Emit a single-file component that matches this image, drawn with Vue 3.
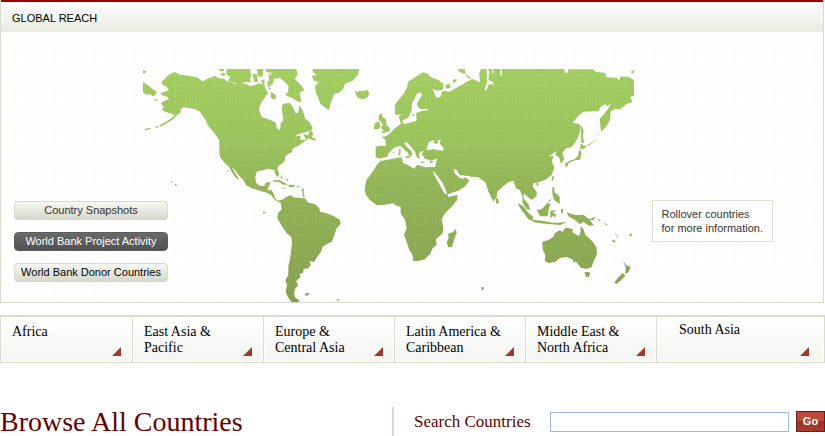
<script setup>
import { ref } from 'vue'

const views = ['Country Snapshots', 'World Bank Project Activity', 'World Bank Donor Countries']
const activeView = ref(1)
const query = ref('')

const regions = [
  ['Africa'],
  ['East Asia &', 'Pacific'],
  ['Europe &', 'Central Asia'],
  ['Latin America &', 'Caribbean'],
  ['Middle East &', 'North Africa'],
  ['South Asia'],
]
</script>

<template>
  <main class="page">
    <section class="reach">
      <h2 class="reach-title">GLOBAL REACH</h2>
      <div class="reach-body">
        <svg class="map" viewBox="429 207 1473 699" role="img" aria-label="World map">
          <defs>
            <linearGradient id="land" x1="0" y1="0" x2="0" y2="1">
              <stop offset="0" stop-color="#a2cd61" />
              <stop offset="0.3" stop-color="#9bc35d" />
              <stop offset="0.5" stop-color="#92b457" />
              <stop offset="1" stop-color="#87a04f" />
            </linearGradient>
            <pattern id="mesh" x="435" y="195" width="30" height="30" patternUnits="userSpaceOnUse">
              <path d="M0 1.5H30M1.5 0V30" stroke="#fff" stroke-opacity=".05" stroke-width="3" fill="none" />
            </pattern>
            <filter id="coast" x="429" y="207" width="1473" height="699" filterUnits="userSpaceOnUse" color-interpolation-filters="sRGB">
              <feTurbulence type="fractalNoise" baseFrequency="0.09" numOctaves="1" seed="4" result="n" />
              <feDisplacementMap in="SourceGraphic" in2="n" scale="4" xChannelSelector="R" yChannelSelector="G" />
            </filter>
            <mask id="continents" maskUnits="userSpaceOnUse" x="429" y="207" width="1473" height="699">
              <g filter="url(#coast)" fill="#fff">
                <!-- North America -->
                <g transform="translate(405 180)">
                  <path d="M80 65L95 50 105 42 120 36 135 44 160 47 185 52 203 64 215 58 240 47 250 55 268 56 275 64 290 66 300 73 315 71 330 70 345 78 360 75 370 70 385 72 395 80 408 84 402 95 395 105 388 115 378 130 372 145 375 160 382 172 400 178 415 184 423 190 425 203 432 210 436 208 437 190 445 180 443 165 440 150 442 135 447 125 460 125 470 135 478 150 485 160 491 150 494 136 505 155 510 175 525 188 533 205 527 212 505 218 490 222 480 230 497 226 496 240 515 240 500 250 490 258 480 262 470 270 472 276 455 285 450 292 450 300 445 308 430 318 427 328 432 340 430 352 422 345 418 330 400 326 385 330 365 335 361 350 363 368 375 378 387 378 392 368 407 366 402 378 397 390 410 391 418 405 420 415 430 422 443 418 446 430 432 427 420 420 408 405 395 398 375 392 350 385 333 375 325 360 310 345 300 330 290 320 298 335 310 355 311 361 300 351 290 335 280 318 268 308 255 290 253 275 253 240 240 222 228 207 218 195 212 180 203 168 195 155 180 148 160 143 145 142 135 150 139 156 125 166 115 178 95 190 75 200 73 196 90 187 110 175 118 165 105 160 90 155 80 148 87 142 78 130 88 122 102 118 98 110 85 108 76 99 95 93 102 90 95 80 80 72Z" />
                  <path d="M20 63L35 73 50 85 66 97 55 110 46 102 35 104 20 95ZM20 30L34 34 30 40 20 39ZM56 117L72 120 60 123ZM28 207L48 203 46 208 30 211ZM58 202L72 197 68 203ZM248 22H269L266 34 255 34ZM260 38L272 40 268 48 258 46ZM275 22H345L347 42 354 57 344 67 326 66 318 75 308 72 290 65 278 62 286 50 274 44ZM352 40L366 44 369 66 357 66ZM365 22H386L384 44 379 51 368 48ZM376 62L391 57 408 68 405 82 390 78ZM391 22H483L488 44 479 57 498 75 508 90 494 98 499 127 486 124 470 113 450 105 459 96 461 79 449 65 434 53 420 57 408 50 409 38 394 36ZM400 38L417 58 411 77 403 66ZM408 95L424 106 420 122 407 116ZM504 222L519 226 526 210 535 221 530 232 544 238 538 242 520 235 514 241Z" />
                  <path d="M414 361L432 360 452 370 460 374 445 374 430 365 416 365ZM461 374L478 375 478 382 461 381ZM442 383L451 384 444 387ZM486 378L494 379 487 383ZM436 345L442 353 438 357ZM448 350L461 361 458 364ZM503 384L508 389 505 395 509 409 505 413 501 391ZM105 363L114 365 112 369ZM119 370L127 376 122 379ZM276 329L283 334 278 336Z" />
                </g>
                <g transform="translate(405 180)" fill="#000">
                  <path d="M399 105L412 117 437 119 460 120 463 128 427 134 421 125 405 124ZM476 146L490 146 490 158 482 160ZM344 52L353 48 358 67 351 72ZM387 30L396 50 398 75 406 96 400 101 389 80Z" />
                </g>
                <!-- Greenland, Europe and Africa -->
                <g transform="translate(900 180)">
                  <path d="M38 22H178L175 43 158 62 135 71 130 86 117 98 102 102 97 117 90 135 87 151 74 142 61 131 55 115 48 98 45 79 56 66 40 61 36 47 51 45 38 36ZM164 91L172 96 179 92 190 94 201 89 208 99 204 110 190 118 173 113 168 103Z" />
                  <path d="M285 162L284 135 295 120 312 100 322 80 324 65 345 52 360 42 370 37 385 42 390 50 415 60 431 72 428 89 412 92 397 86 403 100 411 114 422 110 425 97 432 92 449 96 462 87 477 79 500 68 518 57 533 64 541 69 539 45 545 22H576V410L567 398 560 374 548 358 544 351 515 350 500 346 493 351 508 361 496 379 475 392 443 403 445 411 473 404 471 421 455 440 435 460 425 478 430 505 428 520 408 538 410 555 398 565 390 582 375 598 355 603 340 603 338 585 328 570 320 545 312 525 320 505 315 480 302 460 302 440 290 438 280 430 255 434 230 436 210 420 198 405 194 389 198 363 208 348 220 332 230 315 240 305 242 298 227 291 227 260 240 257 257 259 257 241 245 231 258 229 269 221 285 204 297 196 303 190 296 171 303 161 292 166Z" />
                  <path d="M237 165L246 159 247 170 258 178 260 195 271 207 266 215 242 220 251 210 241 204 249 195 241 182 235 181ZM224 190L238 184 241 200 235 208 221 208ZM436 75L448 70 452 84 439 86ZM458 60L469 57 470 64 459 69ZM471 22H494L496 41 486 40 475 32ZM494 41L510 51 514 60 499 49Z" />
                  <path fill="#000" d="M237 296L262 290 266 280 278 268 285 262 300 257 307 263 325 280 328 293 337 283 333 272 322 262 312 250 321 247 335 262 345 275 350 291 360 298 357 285 359 276 372 272 365 282 375 297 395 301 411 296 405 321 375 322 352 314 342 326 325 316 309 309 305 292 285 295 262 299 243 303ZM379 267L387 246 401 240 402 248 408 253 417 246 410 242 423 239 419 251 432 265 428 272 413 270 400 267 386 271ZM310 192L330 188 350 182 348 160 365 153 384 151 381 146 360 147 352 137 351 130 358 118 367 105 361 97 350 102 342 120 336 129 335 150 328 168 318 177 307 181ZM398 333L406 339 428 369 442 402 434 401 418 373 403 345ZM460 326L470 330 480 346 493 345 497 350 489 356 479 354 464 340ZM552 89L559 78 562 37 557 27 564 26 570 78Z" />
                  <path d="M298 266L302 267 301 286 295 286ZM314 290L328 287 325 296ZM362 304L377 307 363 309ZM388 301L402 304 391 310ZM276 278L284 276 281 281ZM338 159L344 166 338 169Z" />
                </g>
                <!-- Asia -->
                <g transform="translate(1380 180)">
                  <path d="M0 80L18 66 38 58 60 68 58 38 65 22H312L315 38 323 38 325 28H400L407 36 435 38 440 52 470 53 477 62 481 50 506 50 526 63V105L511 111 517 126 500 132 480 148 465 146 452 155 450 180 438 200 423 215 419 176 432 162 445 145 454 128 443 139 434 133 421 142 416 154 400 154 370 155 355 168 338 188 357 192 362 198 359 220 350 240 335 262 318 265 307 279 313 298 303 312 298 294 286 283 289 274 266 289 281 288 275 303 283 324 275 345 255 360 235 367 220 370 218 380 230 395 230 408 215 420 200 408 192 400 190 415 205 432 211 450 200 447 188 430 187 409 180 390 168 385 160 362 145 367 130 378 112 395 110 412 100 424 90 405 82 385 78 365 65 360 55 350 0 345Z" />
                  <path d="M514 34L522 30V40L514 40ZM362 194L371 211 369 232 373 250 364 248ZM362 250L372 257 383 257 371 266 360 267ZM358 268L365 279 360 299 345 301 326 309 320 324 314 312 328 302 344 298 354 287ZM383 255L398 245 413 235 399 247 385 258ZM412 225L419 219 415 226ZM107 415L114 415 117 430 109 431ZM228 370L237 370 233 380ZM276 350L282 347 280 361 275 363Z" />
                  <path fill="#000" d="M80 21L88 36 85 61 99 65 102 82 98 72 85 74 80 91 73 89 81 70ZM94 22L102 37 98 41ZM121 28L126 30 125 48 121 46Z" />
                </g>
                <!-- South America and Madagascar -->
                <g transform="translate(780 540)">
                  <path d="M62 66L75 53 92 45 100 52 120 54 135 55 145 68 165 72 178 85 180 95 200 100 220 107 240 120 242 131 230 145 223 165 215 186 205 190 188 200 183 215 172 230 162 246 147 243 153 254 145 265 131 267 129 279 119 282 122 291 108 304 115 317 106 325 102 340 105 352 119 362 110 370 94 365 84 352 77 336 81 315 76 301 85 285 85 260 92 225 96 190 94 171 80 160 70 145 60 128 52 115 54 100 65 88ZM134 341L149 338 145 346 136 347ZM227 357L238 359 236 364ZM9 94L18 98 10 101ZM587 146L590 158 581 183 576 201 565 202 560 187 566 174 564 162 580 156Z" />
                </g>
                <!-- South-East Asia and Oceania -->
                <g transform="translate(1380 510)">
                  <path d="M247 215L265 210 280 200 285 189 300 180 307 187 316 173 339 177 337 187 356 198 361 190 362 169 370 176 376 194 386 203 399 216 410 233 411 251 401 274 395 291 380 297 362 293 352 280 347 274 341 279 339 269 321 261 300 264 286 275 265 279 254 273 256 256 248 238ZM373 306L390 307 388 320 378 321ZM489 273L498 285 512 291 505 307 495 312 498 295ZM488 309L496 317 480 334 468 343 463 337 476 321ZM64 352L72 352 70 360 65 360ZM507 194L518 190 511 201Z" />
                  <path d="M173 99L190 109 205 128 219 140 218 153 205 148 194 133 181 115ZM218 149L245 152 278 158 300 158 322 155 301 165 275 163 240 160 220 156ZM230 120L245 118 262 99 271 101 266 119 263 139 240 139ZM271 122L291 120 278 128 288 132 285 144 279 136 271 146ZM303 118L309 116 308 132 303 128ZM320 127L334 131 347 135 370 134 386 147 402 166 387 167 370 155 360 163 345 150 325 139ZM384 149L407 140 400 151ZM277 50L283 54 284 69 291 71 299 81 299 102 283 91 277 72ZM263 96L275 85 271 94ZM412 145L422 151 418 154ZM427 155L445 166 439 166ZM463 184L475 205 471 202ZM454 208L468 213 462 218ZM184 113L189 120 185 119Z" />
                </g>
              </g>
            </mask>
          </defs>
          <g mask="url(#continents)">
            <rect x="429" y="207" width="1473" height="699" fill="url(#land)" />
            <rect x="429" y="207" width="1473" height="699" fill="url(#mesh)" />
          </g>
        </svg>

        <div class="views">
          <button
            v-for="(view, i) in views"
            :key="view"
            type="button"
            class="view"
            :class="{ active: i === activeView, strong: i === 2 }"
            @click="activeView = i"
          >{{ view }}</button>
        </div>

        <p class="hint">Rollover countries<br />for more information.</p>
      </div>
    </section>

    <nav class="regions" aria-label="Regions">
      <a v-for="region in regions" :key="region[0]" class="region" href="#">
        <span v-for="line in region" :key="line" class="line">{{ line }}</span>
      </a>
    </nav>

    <section class="browse">
      <h1 class="browse-title">Browse All Countries</h1>
      <form class="search" @submit.prevent>
        <label class="search-label" for="country-search">Search Countries</label>
        <input id="country-search" v-model="query" class="search-input" type="text" />
        <button class="go" type="submit">Go</button>
      </form>
    </section>
  </main>
</template>

<style>
body {
  background: #fff;
}
</style>

<style scoped>
.page {
  font-family: Arial, "Liberation Sans", sans-serif;
  color: #000;
  overflow: hidden;
}

.reach {
  border: 1px solid #d9dbcc;
  border-top: 0;
  margin-right: 1px;
  box-shadow: inset 0 2px #990000;
  padding-top: 2px;
}

.reach-title {
  margin: 0;
  padding: 0 11px;
  font-size: 11px;
  font-weight: normal;
  line-height: 32px;
  height: 30px;
  background: linear-gradient(#fefefe, #e8ebe0);
}

.reach-body {
  display: grid;
  grid-template-columns: auto 1fr;
  padding-top: 37px;
  background-color: #fff;
  background-image:
    linear-gradient(#fafafa 1px, transparent 1px),
    linear-gradient(90deg, #fafafa 1px, transparent 1px);
  background-size: 10px 10px;
  background-position: 4px 3px;
}

.map {
  grid-area: 1 / 1 / 2 / 3;
  display: block;
  width: 491px;
  margin-left: 142px;
}

.views {
  grid-area: 1 / 1;
  align-self: end;
  display: grid;
  gap: 12px;
  padding: 0 0 20px 13px;
}

.view {
  width: 154px;
  height: 19px;
  padding: 0;
  border: 1px solid #d9dbcc;
  border-bottom-color: #d4d6c8;
  border-radius: 4px;
  background: linear-gradient(#f8f8f5, #d6d8ca);
  font-family: inherit;
  font-size: 11px;
  line-height: 17px;
  color: #333;
  white-space: nowrap;
}

.view.active {
  border-color: #5c5c5c;
  background: linear-gradient(#6a6a6a, #505050);
  color: #fff;
}

.view.strong {
  color: #000;
}

.hint {
  grid-area: 1 / 2;
  place-self: end;
  margin: 0 50px 60px 0;
  padding: 6px 9px;
  border: 1px solid #deded2;
  background: #fff;
  font-size: 11px;
  line-height: 14px;
  color: #333;
}

.regions {
  display: grid;
  grid-template-columns: 132px repeat(4, 131px) 1fr;
  margin-top: 12px;
  border: solid #d9dbcc;
  border-width: 2px 1px 1px 0;
}

.region {
  position: relative;
  height: 45px;
  box-sizing: border-box;
  padding: 7px 11px;
  border-left: 1px solid #d9dbcc;
  background: linear-gradient(#fff, #f4f5f0);
  box-shadow: inset 0 0 0 1px #fff;
  font-family: Georgia, "Liberation Serif", serif;
  font-size: 14px;
  line-height: 16px;
  color: #000;
  text-decoration: none;
}

.region::after {
  content: "";
  position: absolute;
  right: 11px;
  bottom: 6px;
  width: 9px;
  height: 9px;
  background: #a0382b;
  clip-path: polygon(100% 0, 100% 100%, 0 100%);
}

.region:last-child {
  padding: 5px 22px;
}

.region:last-child::after {
  right: 15px;
}

.line {
  display: block;
}

.browse {
  display: flex;
  margin-top: 44px;
  font-family: Georgia, "Liberation Serif", serif;
  color: #660000;
}

.browse-title {
  flex: 0 0 392px;
  margin: 0;
  font-size: 28px;
  font-weight: normal;
  line-height: 29px;
}

.search {
  flex: 1;
  display: flex;
  align-items: flex-end;
  padding: 4px 0 4px 20px;
  border-left: 2px solid #d9dbcc;
  height: 21px;
}

.search-label {
  flex: 0 0 136px;
  font-size: 17px;
  line-height: 21px;
  white-space: nowrap;
}

.search-input {
  flex: 1;
  min-width: 0;
  height: 20px;
  box-sizing: border-box;
  margin-right: 7px;
  padding: 0 4px;
  border: 1px solid #a0b8d8;
  background: #fff;
}

.go {
  width: 29px;
  height: 21px;
  padding: 0;
  border: 1px solid #6c1d15;
  background: linear-gradient(#bd4a38 50%, #9a3325 50%, #a63c2c);
  font: bold 11px/19px Arial, "Liberation Sans", sans-serif;
  color: #fff;
}
</style>
